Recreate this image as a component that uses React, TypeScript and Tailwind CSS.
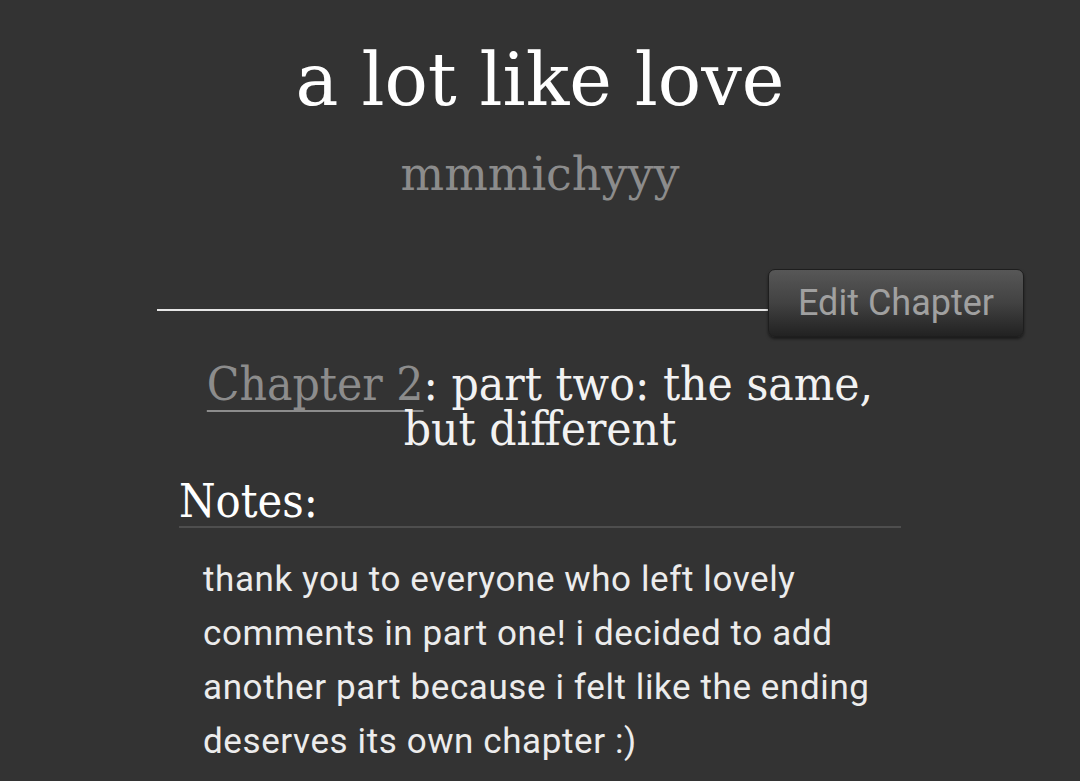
import React from 'react';

const serif = "font-['DejaVu_Serif','Liberation_Serif',serif]";
const serifCond = "font-['DejaVu_Serif_Condensed','DejaVu_Serif','Liberation_Serif',serif]";
const sans = "font-['Roboto','Liberation_Sans',sans-serif]";

const notes =
  'thank you to everyone who left lovely comments in part one! i decided to add another part because i felt like the ending deserves its own chapter :)';

export default function App() {
  return (
    <div className="min-h-[781px] w-full overflow-hidden bg-[#333333] text-[#f2f2f2]">
      {/* work header */}
      <header className="pt-[32px] text-center">
        <h1 className={`${serif} text-[72px] leading-[96px] text-white`}>a lot like love</h1>
        <h2 className={`${serif} mt-[16px] text-[46px] leading-[60px] text-[#8c8c8c]`}>mmmichyyy</h2>
      </header>

      {/* chapter actions */}
      <div className="mt-[65px] flex items-start pl-[157px] pr-[56px]">
        <div className="mt-[40px] h-[2px] flex-1 bg-[#e6e6e6]" />
        <button
          className={`${sans} h-[68px] w-[256px] rounded-[7px] border border-[#1e1e1e] bg-gradient-to-b from-[#575757] via-[#424242] to-[#222222] text-[36px] text-[#a0a0a0] shadow-[0_2px_3px_rgba(0,0,0,0.5)]`}
        >
          Edit Chapter
        </button>
      </div>

      {/* chapter title */}
      <h3 className={`${serifCond} mx-auto mt-[24px] w-[720px] text-center text-[47.5px] leading-[45px] text-[#f2f2f2]`}>
        <a className="text-[#8c8c8c] underline decoration-[#8c8c8c] decoration-[2px] underline-offset-[10px]">Chapter 2</a>
        : part two: the same, but different
      </h3>

      {/* notes */}
      <section className="mx-[179px] mt-[25px]">
        <h4 className={`${serifCond} border-b-2 border-[#4e4e4e] text-[46.5px] leading-[50px] text-white`}>Notes:</h4>
        <p className={`${sans} mt-[25px] pl-[24px] text-[35px] leading-[54px] tracking-[0.6px] text-[#ececec]`}>{notes}</p>
      </section>
    </div>
  );
}
